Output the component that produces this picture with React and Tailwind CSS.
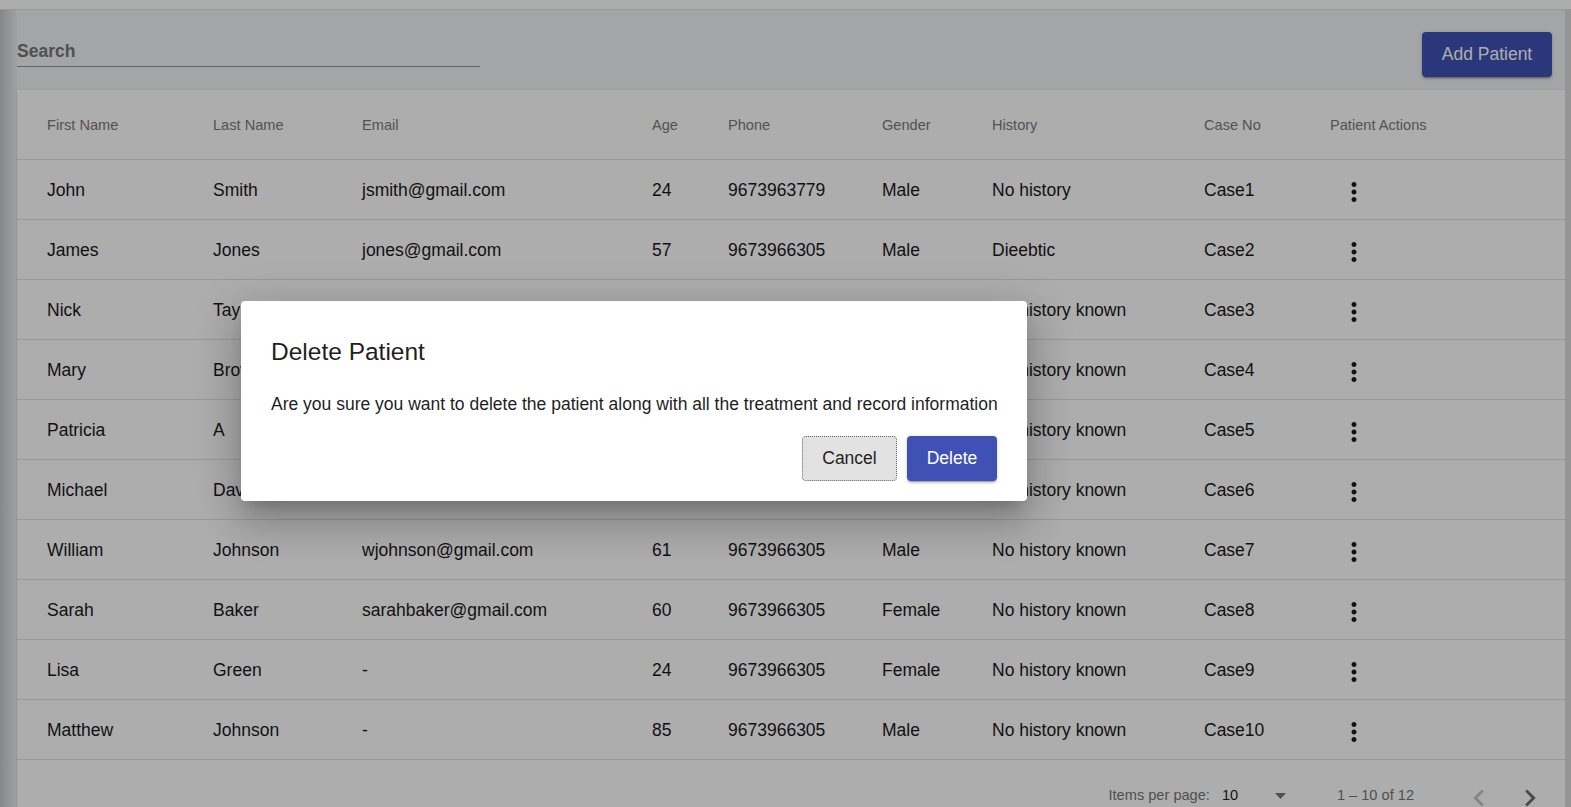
import React from "react";

const rows = [
  ["John", "Smith", "jsmith@gmail.com", "24", "9673963779", "Male", "No history", "Case1"],
  ["James", "Jones", "jones@gmail.com", "57", "9673966305", "Male", "Dieebtic", "Case2"],
  ["Nick", "Taylor", "ntaylor@gmail.com", "45", "9673966305", "Male", "No history known", "Case3"],
  ["Mary", "Brown", "mbrown@gmail.com", "38", "9673966305", "Female", "No history known", "Case4"],
  ["Patricia", "A", "-", "52", "9673966305", "Female", "No history known", "Case5"],
  ["Michael", "Davis", "mdavis@gmail.com", "33", "9673966305", "Male", "No history known", "Case6"],
  ["William", "Johnson", "wjohnson@gmail.com", "61", "9673966305", "Male", "No history known", "Case7"],
  ["Sarah", "Baker", "sarahbaker@gmail.com", "60", "9673966305", "Female", "No history known", "Case8"],
  ["Lisa", "Green", "-", "24", "9673966305", "Female", "No history known", "Case9"],
  ["Matthew", "Johnson", "-", "85", "9673966305", "Male", "No history known", "Case10"],
];

const headers = ["First Name", "Last Name", "Email", "Age", "Phone", "Gender", "History", "Case No", "Patient Actions"];

const grid = "grid grid-cols-[166px_149px_290px_76px_154px_110px_212px_126px_1fr] pl-[30px]";

function MoreVert() {
  return (
    <svg width="30" height="30" viewBox="0 0 24 24" fill="#1a1a1a">
      <path d="M12 8c1.1 0 2-.9 2-2s-.9-2-2-2-2 .9-2 2 .9 2 2 2zm0 2c-1.1 0-2 .9-2 2s.9 2 2 2 2-.9 2-2-.9-2-2-2zm0 6c-1.1 0-2 .9-2 2s.9 2 2 2 2-.9 2-2-.9-2-2-2z" />
    </svg>
  );
}

export default function App() {
  return (
    <div className="relative h-[807px] w-full overflow-hidden bg-[#f2f3f6] font-['Liberation_Sans',Arial,sans-serif] text-[#1a1a1a]">
      <div className="h-[10px] bg-white border-b border-[#e0e0e0]" />
      <div className="flex h-[797px]">
        <div className="w-[17px] shrink-0 bg-gradient-to-r from-[#c6c7c9] to-[#eceef1]" />
        <div className="flex-1 flex flex-col">
          <div className="flex justify-between items-start pt-[22px] pr-[13px]">
            <div className="w-[463px] h-[35px] pt-[9px] border-b border-[#939393]">
              <div className="text-[17.5px] leading-[20px] font-bold text-[#767676]">Search</div>
            </div>
            <button className="h-[45px] w-[130px] rounded-[4px] bg-[#3f51b5] text-white text-[17.5px] shadow-[0_3px_1px_-2px_rgba(0,0,0,.2),0_2px_2px_0_rgba(0,0,0,.14),0_1px_5px_0_rgba(0,0,0,.12)]">
              Add Patient
            </button>
          </div>
          <div className="mt-[13px] bg-white shadow-[0_2px_1px_-1px_rgba(0,0,0,.2),0_1px_1px_0_rgba(0,0,0,.14),0_1px_3px_0_rgba(0,0,0,.12)] flex-1">
            <div className={`${grid} h-[70px] pt-[3px] items-center border-b border-[#e0e0e0] text-[14.6px] text-[#7a7a7a]`}>
              {headers.map((h) => (
                <div key={h}>{h}</div>
              ))}
            </div>
            {rows.map((r, i) => (
              <div key={i} className={`${grid} h-[60px] pt-[2px] items-center border-b border-[#e0e0e0] text-[17.5px] text-[#1a1a1a]`}>
                {r.map((c, j) => (
                  <div key={j}>{c}</div>
                ))}
                <div className="pl-[9px] pt-[2px]">
                  <MoreVert />
                </div>
              </div>
            ))}
            <div className="flex justify-end items-center h-[72px] pr-[18px] text-[14.6px]">
              <span className="text-[#767676]">Items per page:</span>
              <div className="ml-[12px] w-[64px] flex items-center justify-between">
                <span className="text-[#1a1a1a]">10</span>
                <svg width="11" height="6" viewBox="0 0 11 6" className="mt-[1px]">
                  <path d="M0 0h11L5.5 6z" fill="#767676" />
                </svg>
              </div>
              <span className="ml-[51px] text-[#767676]">1 – 10 of 12</span>
              <div className="ml-[48px] w-[34px] h-[34px] mt-[4px]">
                <svg width="34" height="34" viewBox="0 0 24 24" fill="#c4c4c4">
                  <path d="M15.41 7.41L14 6l-6 6 6 6 1.41-1.41L10.83 12z" />
                </svg>
              </div>
              <div className="ml-[17px] w-[34px] h-[34px] mt-[4px]">
                <svg width="34" height="34" viewBox="0 0 24 24" fill="#6e6e6e">
                  <path d="M10 6L8.59 7.41 13.17 12l-4.58 4.59L10 18l6-6z" />
                </svg>
              </div>
            </div>
          </div>
        </div>
        <div className="w-[6px] shrink-0 bg-[#dcdcdc]" />
      </div>

      <div className="absolute inset-0 bg-black/[0.32]" />

      <div className="absolute left-[241px] top-[301px] w-[786px] h-[200px] bg-white rounded-[4px] px-[30px] pt-[37px] shadow-[0_11px_15px_-7px_rgba(0,0,0,.2),0_24px_38px_3px_rgba(0,0,0,.14),0_9px_46px_8px_rgba(0,0,0,.12)]">
        <div className="text-[24.5px] leading-[28px] text-[#1f1f1f]">Delete Patient</div>
        <div className="mt-[28px] text-[17.5px] leading-[20px] text-[#1f1f1f] whitespace-nowrap">
          Are you sure you want to delete the patient along with all the treatment and record information
        </div>
        <div className="mt-[22px] flex justify-end gap-[10px]">
          <button className="h-[45px] w-[95px] rounded-[4px] bg-[#e2e2e2] border border-dotted border-[#6b6b6b] text-[17.5px] text-[#1f1f1f]">
            Cancel
          </button>
          <button className="h-[45px] w-[90px] rounded-[4px] bg-[#3f51b5] text-white text-[17.5px] shadow-[0_3px_1px_-2px_rgba(0,0,0,.2),0_2px_2px_0_rgba(0,0,0,.14),0_1px_5px_0_rgba(0,0,0,.12)]">
            Delete
          </button>
        </div>
      </div>
    </div>
  );
}
